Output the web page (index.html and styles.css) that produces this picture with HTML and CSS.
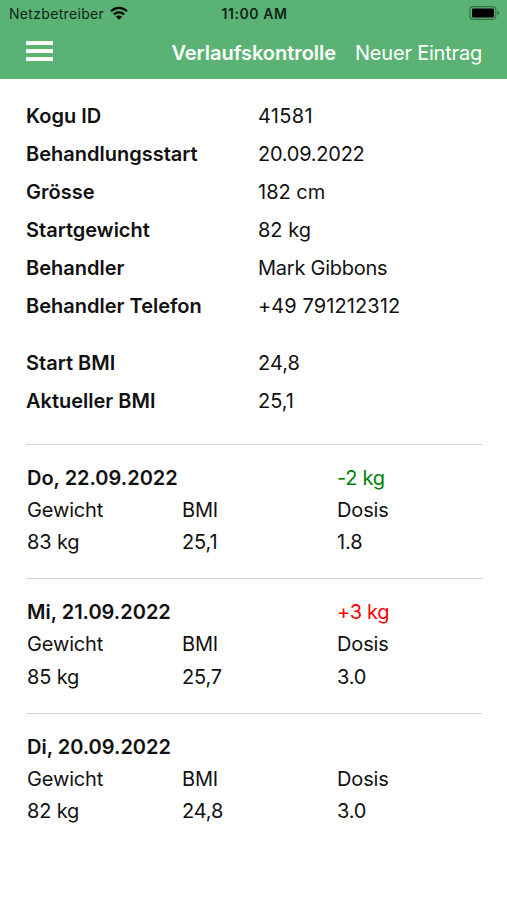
FILE: index.html
```
<!DOCTYPE html>
<html lang="de">
<head>
	<meta charset="UTF-8">
	<title>Verlaufskontrolle</title>
	<link rel="stylesheet" href="styles.css">
</head>
<body>
	<header>
		<div class="statusbar">
			<div class="carrier">
				<span>Netzbetreiber</span>
				<svg class="wifi" width="18" height="14" viewBox="0 0 18 14">
					<path d="M1 5.300C5.500.7 12.500.7 17 5.300M3.900 8.400C6.800 5.700 11.200 5.700 14.100 8.400" fill="none" stroke="#000" stroke-width="2.300"/>
					<path d="M5.900 10.500C7.700 9 10.300 9 12.100 10.500L9 13.700Z"/>
				</svg>
			</div>
			<span class="time">11:00 AM</span>
			<svg class="battery" width="31" height="14" viewBox="0 0 31 14">
				<rect x=".8" y=".6" width="26" height="12.800" rx="3.500" fill="none" stroke="#37714a" stroke-width="1.200"/>
				<rect x="3" y="2.500" width="22" height="9" rx="1.200"/>
				<path d="M28.500 4.800C30.800 5.700 30.800 8.300 28.500 9.200Z" fill="#37714a"/>
			</svg>
		</div>
		<nav class="navbar">
			<div class="menu"><i></i><i></i><i></i></div>
			<span class="title">Verlaufskontrolle</span>
			<a class="new">Neuer Eintrag</a>
		</nav>
	</header>
	<main>
		<dl class="info">
			<dt>Kogu ID</dt><dd class="id">41581</dd>
			<dt>Behandlungsstart</dt><dd class="date">20.09.2022</dd>
			<dt>Grösse</dt><dd>182 cm</dd>
			<dt>Startgewicht</dt><dd>82 kg</dd>
			<dt>Behandler</dt><dd class="name">Mark Gibbons</dd>
			<dt>Behandler Telefon</dt><dd class="phone">+49 791212312</dd>
		</dl>
		<dl class="info bmi">
			<dt>Start BMI</dt><dd>24,8</dd>
			<dt>Aktueller BMI</dt><dd>25,1</dd>
		</dl>
		<section class="entry">
			<h2>Do, 22.09.2022</h2><span class="minus">-2 kg</span>
			<span>Gewicht</span><span>BMI</span><span>Dosis</span>
			<span>83 kg</span><span>25,1</span><span>1.8</span>
		</section>
		<section class="entry">
			<h2>Mi, 21.09.2022</h2><span class="plus">+3 kg</span>
			<span>Gewicht</span><span>BMI</span><span>Dosis</span>
			<span>85 kg</span><span>25,7</span><span>3.0</span>
		</section>
		<section class="entry">
			<h2>Di, 20.09.2022</h2><span></span>
			<span>Gewicht</span><span>BMI</span><span>Dosis</span>
			<span>82 kg</span><span>24,8</span><span>3.0</span>
		</section>
	</main>
</body>
</html>
```
FILE: styles.css
```
*{
	margin: 0;
	padding: 0;
	box-sizing: border-box;
}
body{
	font-family: Inter, "Liberation Sans", sans-serif;
	font-size: 20px;
	color: #111;
	background: #fff;
}
header{
	height: 79px;
	background: #5ab374;
}
.statusbar{
	display: grid;
	grid-template-columns: 1fr auto 1fr;
	align-items: center;
	height: 27px;
	padding: 0 7px 0 9px;
	font-size: 14px;
	color: #10251a;
}
.carrier{
	display: flex;
	align-items: center;
	gap: 6px;
	letter-spacing: .32px;
}
.wifi{
	margin-top: -2px;
}
.time{
	font-size: 14px;
	font-weight: 600;
	letter-spacing: .55px;
}
.battery{
	justify-self: end;
	margin-top: -1px;
}
.navbar{
	display: flex;
	align-items: center;
	height: 51px;
	padding: 0 25px 0 26px;
	color: #fff;
}
.menu{
	display: flex;
	flex-direction: column;
	gap: 4px;
	width: 27px;
	margin: -4px auto 0 0;
}
.menu i{
	height: 4px;
	background: #fff;
}
.title{
	font-weight: 600;
	margin-right: 19px;
	letter-spacing: -.04px;
}
.new{
	letter-spacing: -.2px;
}
main{
	padding: 18px 25px 0 26px;
}
.info{
	display: grid;
	grid-template-columns: 232px 1fr;
	line-height: 38px;
}
dt{
	font-weight: 600;
}
.id{
	letter-spacing: .3px;
}
.date, .name{
	letter-spacing: -.25px;
}
.phone{
	letter-spacing: .1px;
}
.bmi{
	margin: 19px 0 24px;
}
.entry{
	display: grid;
	grid-template-columns: 155px 155px 1fr;
	height: 134.3px;
	padding: 17px 0 0 1px;
	border-top: 1px solid #d4d4d4;
	grid-auto-rows: 32.2px;
	line-height: 32px;
}
.entry span{
	letter-spacing: -.15px;
}
.entry h2{
	grid-column: span 2;
	font-size: 20px;
	font-weight: 600;
}
.entry .minus, .entry .plus{
	letter-spacing: -.3px;
}
.minus{
	color: #008000;
}
.plus{
	color: #f00;
}
```
